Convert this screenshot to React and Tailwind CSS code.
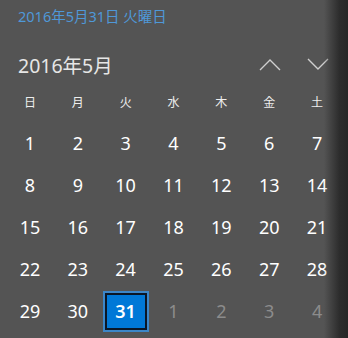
import React from 'react';

const weekdays = ['日', '月', '火', '水', '木', '金', '土'];

// May 2016 grid, starts on Sunday the 1st
const buildDays = () => {
  const days = [];
  for (let d = 1; d <= 31; d++) days.push({ day: d, current: true });
  for (let d = 1; d <= 4; d++) days.push({ day: d, current: false });
  return days;
};

const Chevron = ({ up }) => (
  <svg width="22" height="13" viewBox="0 0 22 13" fill="none">
    <path
      d={up ? 'M1 12 L11 2 L21 12' : 'M1 1 L11 11 L21 1'}
      stroke="#cfcfcf"
      strokeWidth="1.4"
    />
  </svg>
);

const App = () => {
  const days = buildDays();

  return (
    <div
      className="relative w-[348px] h-[338px] overflow-hidden bg-[#545454] text-white"
      style={{ fontFamily: '"Noto Sans", "Noto Sans CJK JP", sans-serif' }}
    >
      <div className="ml-[18px] mt-[6px] h-[20px] text-[14.5px] leading-[20px] text-[#4f98d8]">
        2016年5月31日 火曜日
      </div>

      <div className="flex items-center justify-between h-[28px] mt-[26px] pl-[18px] pr-[19px]">
        <span className="text-[19.5px] leading-[28px] text-[#e6e6e6]">2016年5月</span>
        <div className="flex items-center gap-[26px] -mt-[4px]">
          <Chevron up />
          <Chevron />
        </div>
      </div>

      <div className="grid grid-cols-7 w-[335px] ml-[6px] mt-[8px] h-[30px] items-center text-[12px] text-[#eeeeee]">
        {weekdays.map((w) => (
          <div key={w} className="text-center">{w}</div>
        ))}
      </div>

      <div className="grid grid-cols-7 w-[335px] ml-[6px] mt-[4px]">
        {days.map((d, i) =>
          d.current && d.day === 31 ? (
            <div key={i} className="h-[42px] flex items-center justify-center">
              <div className="w-[46px] h-[41px] border-2 border-[#3c86c8] bg-[#0a1626] p-[2px]">
                <div className="w-full h-full bg-[#0078d7] flex items-center justify-center text-[18px] font-semibold text-white">
                  31
                </div>
              </div>
            </div>
          ) : (
            <div
              key={i}
              className={`h-[42px] flex items-center justify-center text-[18px] ${
                d.current ? 'text-white' : 'text-[#8c8c8c]'
              }`}
            >
              {d.day}
            </div>
          )
        )}
      </div>

      {/* shadow of the window on the right */}
      <div className="absolute top-0 right-0 h-full w-[24px] bg-[linear-gradient(to_right,transparent,#2c2c2c_65%,#262626)]" />
    </div>
  );
};

export default App;
